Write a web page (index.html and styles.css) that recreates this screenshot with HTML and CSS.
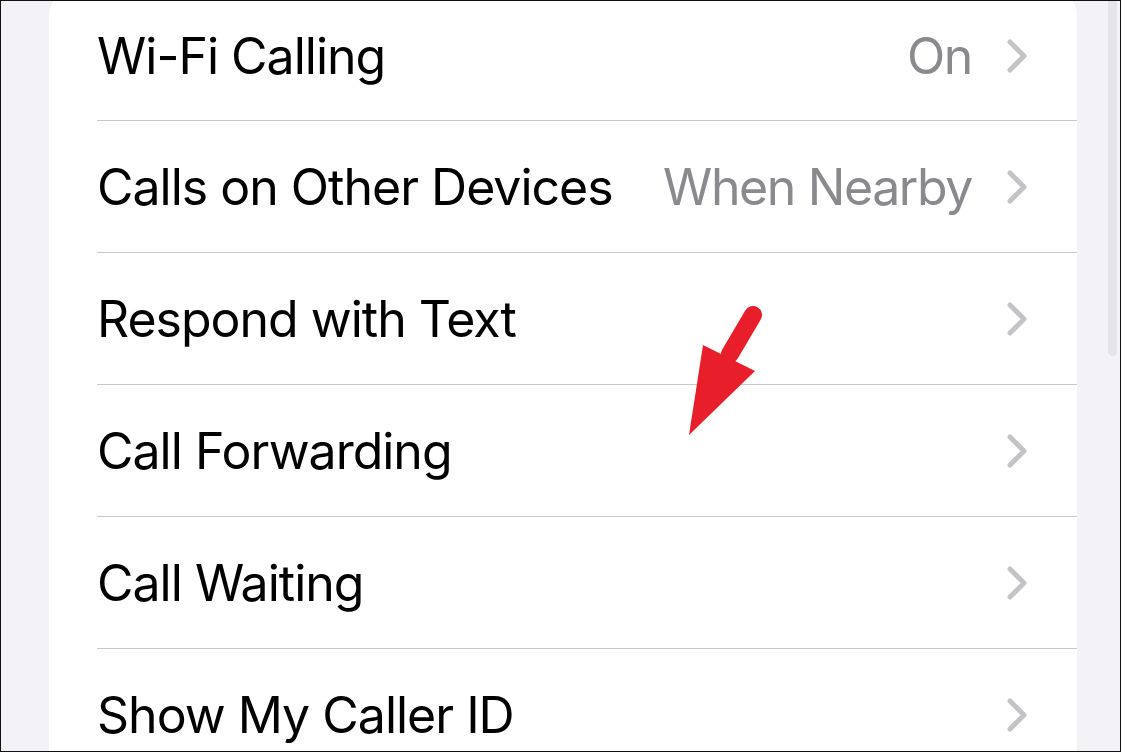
FILE: index.html
```html
<!DOCTYPE html>
<html lang="en">

<head>
    <meta charset="UTF-8">
    <meta name="viewport" content="width=device-width, initial-scale=1.0">
    <title>Phone Settings</title>
    <link rel="stylesheet" href="styles.css">
</head>

<body>

    <div class="screen">
        <!-- Settings group -->
        <div class="card">
            <div class="row">
                <span class="label">Wi-Fi Calling</span>
                <span class="value">On</span>
                <svg class="chevron" viewBox="0 0 22 36"><path d="M4 4 L18 18 L4 32"/></svg>
            </div>
            <div class="row">
                <span class="label">Calls on Other Devices</span>
                <span class="value">When Nearby</span>
                <svg class="chevron" viewBox="0 0 22 36"><path d="M4 4 L18 18 L4 32"/></svg>
            </div>
            <div class="row">
                <span class="label">Respond with Text</span>
                <svg class="chevron" viewBox="0 0 22 36"><path d="M4 4 L18 18 L4 32"/></svg>
            </div>
            <div class="row">
                <span class="label">Call Forwarding</span>
                <svg class="chevron" viewBox="0 0 22 36"><path d="M4 4 L18 18 L4 32"/></svg>
            </div>
            <div class="row">
                <span class="label">Call Waiting</span>
                <svg class="chevron" viewBox="0 0 22 36"><path d="M4 4 L18 18 L4 32"/></svg>
            </div>
            <div class="row">
                <span class="label">Show My Caller ID</span>
                <svg class="chevron" viewBox="0 0 22 36"><path d="M4 4 L18 18 L4 32"/></svg>
            </div>
        </div>

        <!-- Scroll indicator -->
        <div class="scrollbar"></div>

        <!-- Annotation arrow pointing at Call Forwarding -->
        <svg class="arrow" viewBox="0 0 80 130">
            <line x1="63" y1="13" x2="40" y2="52" />
            <polygon points="13,43 65,69 -1,133" />
        </svg>
    </div>

</body>

</html>
```

FILE: styles.css
```css
* {
    box-sizing: border-box;
    margin: 0;
    padding: 0;
}

body {
    font-family: 'Inter', 'Noto Sans', sans-serif;
    background-color: #f2f2f7;
    color: #000;
    overflow: hidden;
}

.screen {
    position: relative;
    width: 1121px;
    height: 752px;
    border: 1px solid #111;
    background-color: #f2f2f7;
    overflow: hidden;
}

.card {
    margin: -10px 43px 0 48px;
    background-color: #fff;
    border-radius: 24px;
}

.row {
    display: flex;
    align-items: center;
    height: 132px;
    margin-left: 48px;
    padding: 0 49px 0 0;
    border-bottom: 1px solid #c8c8cb;
}

.row:first-child {
    height: 130px;
}

.label {
    flex: 1;
    font-size: 50px;
    letter-spacing: -1px;
    white-space: nowrap;
}

.value {
    font-size: 50px;
    letter-spacing: -1.4px;
    color: #8a8a8e;
    margin-right: 34px;
}

.chevron {
    width: 22px;
    height: 36px;
    fill: none;
    stroke: #c4c4c7;
    stroke-width: 5;
    stroke-linecap: round;
    stroke-linejoin: round;
}

.scrollbar {
    position: absolute;
    top: -10px;
    right: 3px;
    width: 9px;
    height: 365px;
    border-radius: 5px;
    background-color: #e4e4e9;
}

.arrow {
    position: absolute;
    left: 689px;
    top: 299px;
    width: 80px;
    height: 134px;
    overflow: visible;
}

.arrow line {
    stroke: #e81f2a;
    stroke-width: 18;
    stroke-linecap: round;
}

.arrow polygon {
    fill: #e81f2a;
}
```
